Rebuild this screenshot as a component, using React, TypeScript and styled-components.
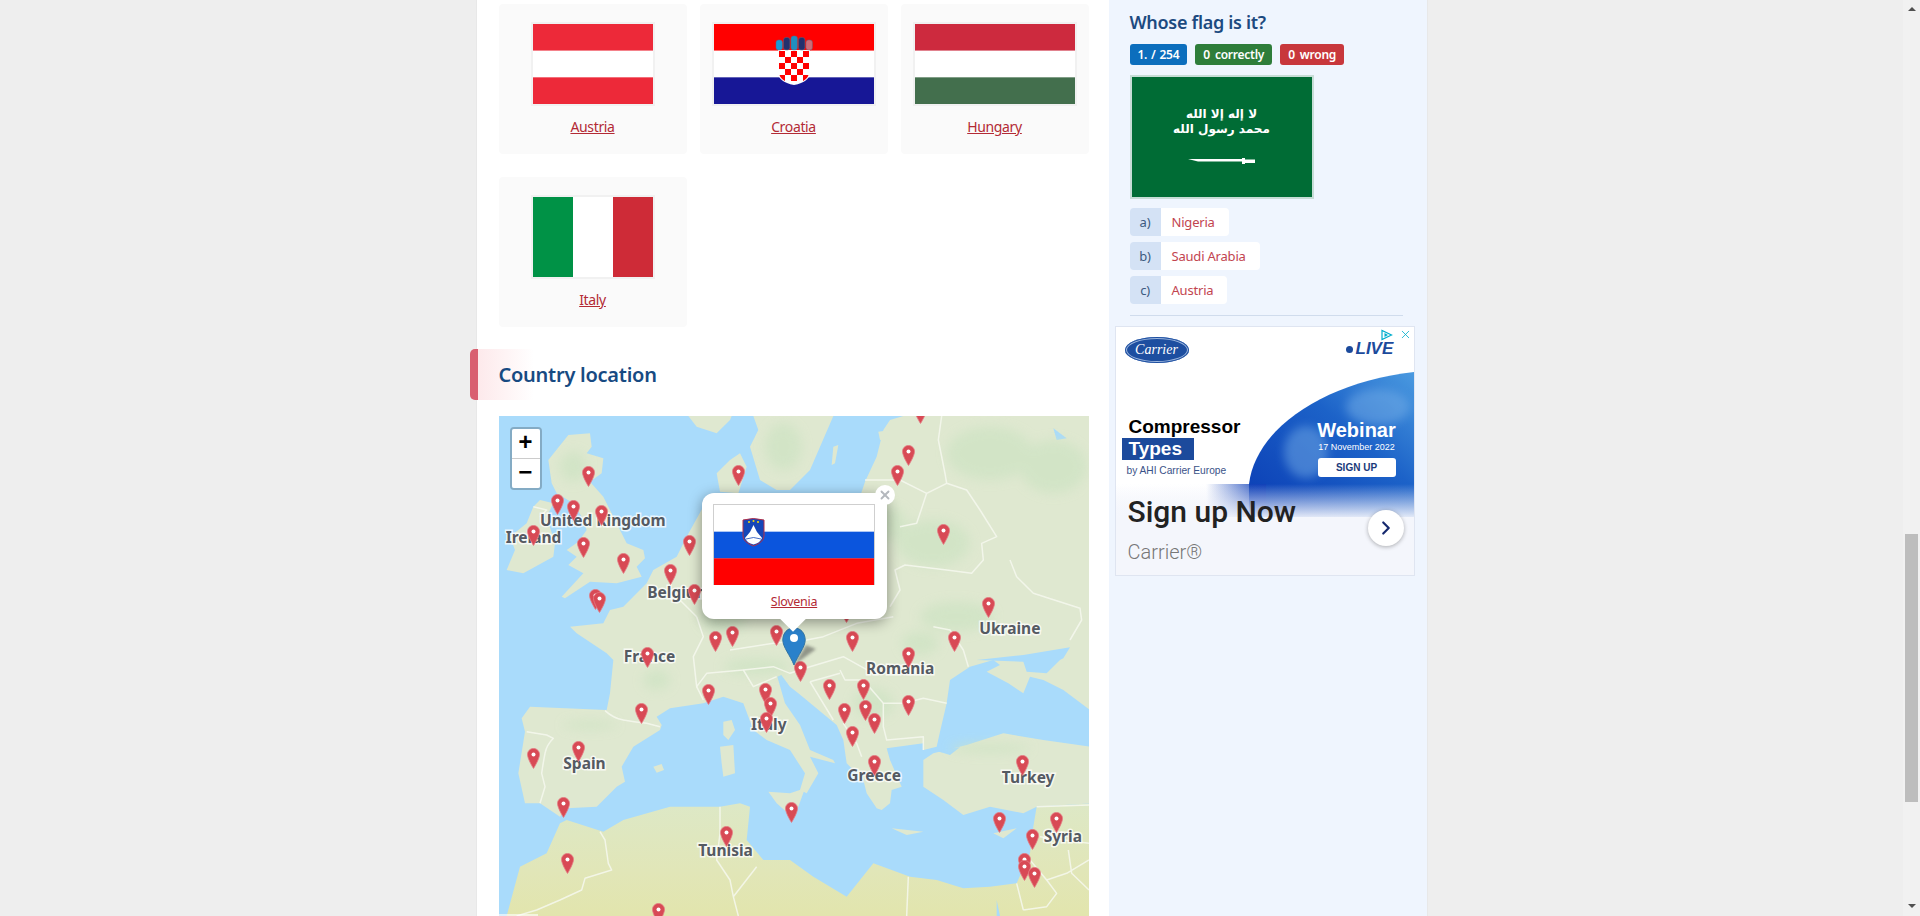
import React from "react";
import styled, { createGlobalStyle } from "styled-components";
import { X, ChevronRight } from "lucide-react";

const Global = createGlobalStyle`
    html, body { margin: 0; padding: 0; height: 100%; overflow: hidden; }
    body {
        background: #eeeeee;
        font-family: "Noto Sans", "Liberation Sans", sans-serif;
    }
`;

const Page = styled.div`
    display: flex;
    height: 916px;
    overflow: hidden;
`;

const Viewport = styled.div`
    flex: 1;
    display: flex;
    justify-content: center;
    min-width: 0;
`;

const Container = styled.div`
    width: 950px;
    display: flex;
    background: #fff;
    box-shadow: 0 0 0 1px #e8e8e8;
`;

const Main = styled.main`
    width: 632px;
    box-sizing: border-box;
    padding: 4px 20px 0 22px;
`;

const Cards = styled.div`
    display: grid;
    grid-template-columns: repeat(3, 188px);
    column-gap: 13px;
    row-gap: 23px;
`;

const Card = styled.div`
    height: 150px;
    box-sizing: border-box;
    padding-top: 18px;
    background: #fafafa;
    border-radius: 4px;
    display: flex;
    flex-direction: column;
    align-items: center;
`;

const FlagFrame = styled.div`
    border: 2px solid #f1f1f1;
    line-height: 0;
    svg { display: block; }
`;

const CountryLink = styled.a`
    margin-top: 11px;
    font-size: 14px;
    line-height: 20px;
    letter-spacing: -0.35px;
    color: #b32a35;
    text-decoration: underline;
`;

const SectionTitle = styled.h2`
    margin: 22px 0 0 -29px;
    height: 51px;
    padding-left: 29px;
    display: flex;
    align-items: center;
    font-size: 20px;
    font-weight: 600;
    letter-spacing: -0.25px;
    color: #174a82;
    border-radius: 5px 0 0 5px;
    background: linear-gradient(90deg, #d95f70 0, #d95f70 8px, #fde9eb 8px, #ffffff 64px);
`;

const MapBox = styled.div`
    position: relative;
    margin-top: 16px;
    width: 590px;
    height: 500px;
    overflow: hidden;
    background: #a9dbfb;
`;

const MapArt = styled.svg`
    display: block;
`;

const ZoomBar = styled.div`
    position: absolute;
    left: 11px;
    top: 11px;
    border: 2px solid rgba(0, 0, 0, 0.22);
    border-radius: 4px;
    background-clip: padding-box;
    display: flex;
    flex-direction: column;
`;

const ZoomButton = styled.a`
    width: 28px;
    height: 29px;
    background: #fff;
    display: flex;
    align-items: center;
    justify-content: center;
    font: bold 24px "Liberation Mono", monospace;
    color: #000;
    &:first-child {
        border-bottom: 1px solid #ccc;
        border-radius: 2px 2px 0 0;
    }
    &:last-child {
        border-radius: 0 0 2px 2px;
    }
`;

const MapLabel = styled.span`
    position: absolute;
    transform: translate(-50%, -50%);
    margin-top: -1px;
    font-size: 15.5px;
    font-weight: 700;
    white-space: nowrap;
    color: #555a62;
    paint-order: stroke fill;
    -webkit-text-stroke: 3px rgba(255, 255, 255, 0.75);
`;

const PinMark = styled.svg`
    position: absolute;
    width: 13px;
    height: 21px;
    margin: -20px 0 0 -6.5px;
`;

const ActiveMarker = styled.svg`
    position: absolute;
    left: 283px;
    top: 211px;
`;

const ScaleText = styled.span`
    position: absolute;
    left: 0;
    bottom: -10px;
    font: 11px "Liberation Sans", sans-serif;
    color: #333;
    background: rgba(255, 255, 255, 0.6);
`;

const Popup = styled.div`
    position: absolute;
    left: 203px;
    top: 77px;
    width: 185px;
    height: 126px;
    box-sizing: border-box;
    padding: 11px 11px 0;
    background: #fff;
    border-radius: 12px;
    box-shadow: 0 3px 14px rgba(0, 0, 0, 0.4);
    display: flex;
    flex-direction: column;
    align-items: center;
    &::after {
        content: "";
        position: absolute;
        left: 82px;
        bottom: -9px;
        width: 18px;
        height: 18px;
        background: #fff;
        transform: rotate(45deg);
    }
`;

const PopupFlag = styled.div`
    border: 1px solid #cfcfcf;
    border-bottom-width: 0;
    line-height: 0;
    svg { display: block; }
`;

const PopupLink = styled.a`
    margin-top: 8px;
    font-size: 12.5px;
    line-height: 18px;
    letter-spacing: -0.3px;
    color: #b32a35;
    text-decoration: underline;
    position: relative;
    z-index: 1;
`;

const PopupClose = styled.span`
    position: absolute;
    right: -8px;
    top: -8px;
    width: 20px;
    height: 20px;
    border-radius: 50%;
    background: #fff;
    color: #b4b8bd;
    display: flex;
    align-items: center;
    justify-content: center;
`;

const Sidebar = styled.aside`
    width: 318px;
    box-sizing: border-box;
    padding: 7px 24px 0 21px;
    background: #eff5fe;
`;

const SideTitle = styled.h3`
    margin: 0;
    font-size: 18px;
    line-height: 30px;
    font-weight: 600;
    letter-spacing: -0.3px;
    color: #1c4a80;
`;

const Badges = styled.div`
    display: flex;
    gap: 8px;
    margin-top: 7px;
`;

const Badge = styled.span<{ $bg: string }>`
    height: 21px;
    padding: 0 8px;
    border-radius: 3px;
    background: ${p => p.$bg};
    color: #fff;
    font-size: 12px;
    font-weight: 600;
    letter-spacing: -0.25px;
    word-spacing: 1px;
    display: flex;
    align-items: center;
    gap: 5px;
`;

const SaudiFlag = styled.div`
    margin-top: 10px;
    width: 180px;
    height: 120px;
    border: 2px solid #c6ddd6;
    background: #006c35;
    display: flex;
    flex-direction: column;
    align-items: center;
`;

const Shahada = styled.div`
    margin-top: 30px;
    display: flex;
    flex-direction: column;
    align-items: center;
    font: bold 12px/15px "DejaVu Sans", sans-serif;
    color: #fff;
    direction: rtl;
    white-space: nowrap;
`;

const Sword = styled.svg`
    margin-top: 21px;
`;

const Options = styled.div`
    margin-top: 9px;
    display: flex;
    flex-direction: column;
    align-items: flex-start;
    gap: 6px;
`;

const Option = styled.div`
    display: flex;
    height: 28px;
    font-size: 13px;
    letter-spacing: -0.2px;
    line-height: 28px;
`;

const OptionKey = styled.span`
    width: 31px;
    text-align: center;
    background: #d4e2f5;
    color: #3c5a80;
    border-radius: 4px 0 0 4px;
`;

const OptionValue = styled.a`
    padding: 0 14px 0 11px;
    background: #fff;
    color: #c2444f;
    border-radius: 0 4px 4px 0;
`;

const Divider = styled.hr`
    margin: 11px 0 0;
    border: 0;
    border-top: 1px solid #d0dced;
`;

const Ad = styled.div`
    position: relative;
    margin: 10px 0 0 -15px;
    width: 298px;
    height: 248px;
    border: 1px solid #dfe5f1;
    overflow: hidden;
    background: linear-gradient(180deg, #ffffff 0, #ffffff 157px, #f4f6fc 190px);
    font-family: "Liberation Sans", sans-serif;
`;

const AdArt = styled.svg`
    position: absolute;
    left: 0;
    top: 0;
`;

const AdChoices = styled.div`
    position: absolute;
    right: 2px;
    top: 1px;
    display: flex;
    align-items: center;
    gap: 6px;
    color: #00aecd;
`;

const AdLogo = styled.div`
    position: absolute;
    left: 9px;
    top: 10px;
    width: 64px;
    height: 26px;
    border-radius: 50%;
    background: #1d4ea0;
    box-shadow: inset 0 0 0 1px #1d4ea0, inset 0 0 0 2px #9db7de;
    color: #fff;
    font: italic 14px/26px "Liberation Serif", serif;
    text-align: center;
`;

const AdLive = styled.div`
    position: absolute;
    left: 230px;
    top: 13px;
    display: flex;
    align-items: center;
    gap: 3px;
    font: italic bold 17px/18px "Liberation Sans", sans-serif;
    color: #1b4a9c;
    &::before {
        content: "";
        width: 7px;
        height: 7px;
        border-radius: 50%;
        background: #1b4a9c;
    }
`;

const AdHeadline = styled.div`
    position: absolute;
    left: 13px;
    top: 89px;
    font: bold 19px/22px "Liberation Sans", sans-serif;
    color: #000;
`;

const AdHighlight = styled.div`
    position: absolute;
    left: 6px;
    top: 111px;
    width: 65px;
    height: 22px;
    padding-left: 7px;
    background: #1c4a9c;
    color: #fff;
    font: bold 19px/21px "Liberation Sans", sans-serif;
`;

const AdBy = styled.div`
    position: absolute;
    left: 11px;
    top: 137px;
    font-size: 10.2px;
    line-height: 13px;
    color: #3a5288;
    white-space: nowrap;
`;

const AdWebinar = styled.div`
    position: absolute;
    left: 191px;
    width: 100px;
    top: 91px;
    display: flex;
    flex-direction: column;
    align-items: center;
    color: #fff;
    b { font-size: 20px; line-height: 24px; }
    span { font-size: 9px; line-height: 12px; white-space: nowrap; margin-top: -1px; }
`;

const AdSignUp = styled.div`
    margin-top: 5px;
    width: 78px;
    height: 19px;
    border-radius: 3px;
    background: #fff;
    color: #1a3a7a;
    font-size: 10px;
    font-weight: 700;
    line-height: 19px;
    text-align: center;
`;

const AdFoot = styled.div`
    position: absolute;
    left: 12px;
    right: 10px;
    top: 167px;
    display: flex;
    align-items: center;
    justify-content: space-between;
`;

const AdCopy = styled.div`
    display: flex;
    flex-direction: column;
    font-family: Roboto, sans-serif;
`;

const AdCta = styled.span`
    font-size: 30px;
    line-height: 36px;
    font-weight: 500;
    color: #222;
`;

const AdBrand = styled.span`
    margin-top: 10px;
    font-size: 20px;
    line-height: 24px;
    font-weight: 300;
    color: #777;
`;

const AdRound = styled.span`
    width: 36px;
    height: 36px;
    border-radius: 50%;
    background: #fff;
    box-shadow: 0 1px 4px rgba(0, 0, 0, 0.3);
    color: #16296e;
    display: flex;
    align-items: center;
    justify-content: center;
    margin-top: -3px;
`;

const ScrollTrack = styled.div`
    width: 17px;
    flex: none;
    background: #f1f1f1;
    display: flex;
    flex-direction: column;
    align-items: center;
`;

const ScrollArrow = styled.span<{ $down?: boolean }>`
    width: 0;
    height: 0;
    margin-top: ${p => (p.$down ? "102px" : "7px")};
    border-left: 4px solid transparent;
    border-right: 4px solid transparent;
    ${p => (p.$down ? "border-top: 4px solid #505050;" : "border-bottom: 4px solid #505050;")}
`;

const ScrollThumb = styled.div`
    margin-top: 523px;
    width: 13px;
    height: 268px;
    background: #bdbdbd;
`;

const Stripes: React.FC<{ colors: string[]; vertical?: boolean; w: number; h: number; children?: React.ReactNode }> = ({ colors, vertical, w, h, children }) => (
    <svg width={w} height={h} viewBox={`0 0 ${w} ${h}`}>
        {colors.map((c, i) => vertical
            ? <rect key={i} x={(i * w) / colors.length} y={0} width={w / colors.length + 0.2} height={h} fill={c} />
            : <rect key={i} x={0} y={(i * h) / colors.length} width={w} height={h / colors.length + 0.2} fill={c} />)}
        {children}
    </svg>
);

const CroatiaArms = () => {
    const cells = [];
    for (let r = 0; r < 5; r++) {
        for (let c = 0; c < 5; c++) {
            cells.push(<rect key={`${r}-${c}`} x={65 + c * 6} y={27 + r * 6} width={6} height={6} fill={(r + c) % 2 ? "#fff" : "#f00"} />);
        }
    }
    const crown = [["#1a9ad6", 62, 16], ["#23306e", 69.500, 13.500], ["#1f8fc0", 77, 12], ["#23306e", 84.500, 13.500], ["#ce6b77", 92, 16]] as const;
    return (
        <g>
            <path d="M64 26H96V48Q96 58 80 61Q64 58 64 48Z" fill="#fff" />
            <clipPath id="shield"><path d="M65 27H95V48Q95 57 80 60Q65 57 65 48Z" /></clipPath>
            <g clipPath="url(#shield)">{cells}</g>
            {crown.map(([fill, x, y], i) => <rect key={i} x={x} y={y} width={6.4} height={26 - y} rx={2.500} fill={fill} stroke="#5a6a80" strokeWidth={0.5} />)}
        </g>
    );
};

const SloveniaArms = () => (
    <g>
        <path d="M29 15Q39 12 50 15V31Q50 37 39.500 41Q29 37 29 31Z" fill="#1546b8" stroke="#b0304a" strokeWidth={1} />
        <path d="M31 33L36 27L39.500 20L43 27L48 33Q46 38 39.500 39.500Q33 38 31 33Z" fill="#fff" />
        <path d="M32 34Q39.500 31 47 34" fill="none" stroke="#1546b8" strokeWidth={0.8} />
        <circle cx={35} cy={17} r={1} fill="#f5d90a" />
        <circle cx={39.500} cy={16} r={1} fill="#f5d90a" />
        <circle cx={44} cy={17} r={1} fill="#f5d90a" />
    </g>
);

// all map coordinates are full screen pixels x3, with the map's corner at 27,18
const mapX = (g: number) => (g - 27) / 3;
const mapY = (g: number) => (g - 18) / 3;

const PINS: [number, number][] = [
    [297, 229], [203, 312], [251, 330], [336, 345], [131, 405], [281, 442], [401, 488], [600, 434], [542, 522],
    [615, 582], [317, 597], [329, 607], [677, 724], [729, 708], [860, 705], [746, 226],
    [473, 772], [455, 940], [656, 882], [828, 880], [843, 922], [830, 967], [131, 1073], [266, 1053], [221, 1222],
    [233, 1390], [507, 1540], [710, 1307],
    [1292, 38], [1257, 165], [1223, 226], [1361, 402], [1496, 622], [1088, 724], [1394, 724], [1070, 636],
    [1257, 770], [933, 814], [1019, 868], [1121, 867], [1257, 916], [1064, 939], [1128, 930], [1155, 970], [1088, 1008],
    [1155, 1095], [1598, 1095], [1530, 1266], [1700, 1266], [1629, 1318], [1605, 1390], [1605, 1410], [1635, 1432], [905, 1235],
];

const LABELS: [string, number, number][] = [
    ["United Kingdom", 340, 333], ["Ireland", 132, 385], ["Belgium", 569, 548], ["France", 480, 740],
    ["Romania", 1232, 778], ["Ukraine", 1561, 658], ["Italy", 838, 945], ["Spain", 285, 1062],
    ["Tunisia", 708, 1322], ["Greece", 1154, 1099], ["Turkey", 1616, 1103], ["Syria", 1720, 1280],
];

const BORDERS = [
    "M345 902Q370 925 400 930T470 940L510 950",
    "M110 965L170 975L190 985Q170 1005 165 1030T155 1090L165 1130L150 1180",
    "M330 1265L345 1290L355 1360L365 1380L285 1405L275 1440L210 1470L140 1500L80 1518",
    "M690 1190L690 1270L680 1350L720 1410L730 1460L800 1370M730 1460L745 1518",
    "M1255 1400L1250 1518",
    "M1355 18L1345 90L1365 190L1370 220L1430 240L1470 300L1520 380L1475 400L1480 450L1445 490L1370 480L1245 465L1215 480L1230 540L1200 590",
    "M1560 450L1580 500L1630 550L1770 595L1775 630L1740 690",
    "M1125 210L1230 210L1310 250L1370 220M1310 250L1280 340L1230 350",
    "M1330 650L1380 660L1420 720L1435 770",
    "M1050 780L1065 810L1120 810L1180 880L1240 880L1300 865L1370 880",
    "M1180 880L1180 950L1190 990L1300 980L1300 1020",
    "M960 815L1050 790M960 815L1030 930M1060 940L1100 1000L1115 1040",
    "M1640 1190L1797 1185M1650 1280L1797 1300M1670 1410L1730 1390L1797 1350M1735 1320L1745 1390L1797 1440",
    "M1620 1350L1670 1410L1700 1450L1670 1490L1600 1500M1580 1420L1600 1500",
    "M620 620L640 680L610 740L620 830L650 790L760 780L850 770L900 790L960 770L1060 740L1150 790",
    "M720 720L850 700L950 690L1000 680L1100 640L1210 620",
    "M560 560L620 620M620 830L640 870M760 780L790 830L860 800",
    "M130 290L170 300L150 320",
];

const FOREST: [number, number, number, number][] = [
    [1500, 130, 130, 80], [1690, 170, 100, 80], [1330, 400, 110, 70], [1200, 340, 50, 50], [880, 110, 55, 70],
    [800, 770, 100, 25], [1290, 700, 55, 35], [1150, 880, 60, 45], [250, 170, 40, 45], [500, 810, 40, 30],
    [300, 945, 80, 12], [1500, 1015, 120, 14], [700, 620, 70, 50], [1400, 620, 110, 45],
];

const MapDrawing = () => (
    <MapArt width={590} height={500} viewBox="27 18 1770 1500">
        <defs>
            <linearGradient id="desert" x1="0" y1="1180" x2="0" y2="1518" gradientUnits="userSpaceOnUse">
                <stop offset="0" stopColor="#dde8c6" />
                <stop offset="0.6" stopColor="#e1e6b8" />
                <stop offset="1" stopColor="#e2e5ad" />
            </linearGradient>
            <filter id="soft" x="-30%" y="-30%" width="160%" height="160%">
                <feGaussianBlur stdDeviation="16" />
            </filter>
        </defs>
        <rect x="27" y="18" width="1770" height="1500" fill="#a9dbfb" />
        <g fill="#dfe8d0">
            <path d="M1240 18L1800 18L1800 900L1720 840L1660 810L1620 800L1600 850L1555 820L1490 785L1530 765L1510 750L1440 770L1380 810L1370 880L1350 965L1340 1010L1300 1020L1300 1000L1190 1015L1200 1050L1235 1130L1205 1140L1200 1180L1175 1200L1160 1195L1130 1150L1120 1110L1070 1060L1060 990L1040 945L925 850L900 830L874 795L862 800L885 880L930 945L960 1020L1030 1050L1035 1060L960 1040L985 1090L950 1150L930 1140L945 1090L900 1020L830 990L790 960L760 880L700 860L640 880L540 895L500 920L515 945L510 960L430 1010L395 1070L405 1115L380 1130L320 1190L230 1195L210 1220L150 1180L105 1180L85 1090L105 965L95 925L120 890L350 900L360 850L370 750L350 730L260 670L240 650L340 640L360 600L400 590L470 520L490 480L560 440L590 380L640 290L700 260L1110 260L1125 215L1160 140L1180 60L1200 30Z" />
            <path d="M790 18L805 60L780 110L810 210L860 240L900 240L960 180L1030 18Z" />
            <path d="M595 18L620 50L680 70L720 30L725 18Z" />
            <path d="M690 245L680 190L720 150L750 130L770 170L745 250Z" />
            <path d="M235 75L300 70L305 110L290 130L340 145L335 190L300 215L340 260L370 320L410 400L460 420L465 445L440 470L455 500L380 520L300 515L225 565L215 560L280 490L235 465L260 440L230 420L265 395L290 360L275 320L250 280L200 250L185 220L175 150Z" />
            <path d="M150 270L190 280L170 320L195 400L190 440L100 490L50 480L75 420L60 380L110 340L130 290Z" />
            <path d="M700 935L725 930L735 960L715 990L700 975Z" />
            <path d="M690 1010L730 1005L735 1090L700 1100L695 1060Z" />
            <path d="M490 1070L515 1062L522 1080L500 1088Z" />
            <path d="M835 1145L900 1150L945 1135L925 1190L900 1215L860 1180Z" />
            <path d="M1205 1255L1300 1265L1250 1275Z" />
            <path d="M1510 1270L1580 1255L1540 1285Z" />
            <path d="M1030 110L1045 105L1035 160L1025 165Z" />
            <path d="M1165 65L1200 60L1195 85L1170 90Z" />
        </g>
        <path fill="url(#desert)" d="M50 1518L90 1370L170 1330L210 1240L230 1230L340 1265L400 1230L540 1190L690 1190L750 1180L780 1190L770 1290L820 1350L900 1350L970 1400L1070 1460L1150 1360L1260 1400L1340 1410L1420 1435L1500 1430L1580 1420L1620 1330L1630 1250L1640 1190L1800 1180L1800 1518Z" />
        <path fill="#dfe8d0" d="M1300 1050L1330 1030L1430 1005L1540 970L1660 990L1800 1010L1800 1180L1640 1190L1600 1210L1500 1190L1420 1215L1360 1170L1300 1130Z" />
        <g fill="#a9dbfb">
            <path d="M1460 750L1600 735L1740 712L1720 745L1710 750L1670 790L1610 785L1600 755Z" />
            <path d="M1330 1020L1410 1012L1380 1035Z" />
            <path d="M1690 55L1730 85L1700 90Z" />
            <path d="M1520 1470L1530 1518L1520 1518Z" />
        </g>
        <g fill="#cde3c3" opacity="0.7" filter="url(#soft)">
            {FOREST.map(([cx, cy, rx, ry], i) => <ellipse key={i} cx={cx} cy={cy} rx={rx} ry={ry} />)}
        </g>
        <g fill="none" stroke="#f6f8ee" strokeWidth="4.500" strokeOpacity="0.85" strokeLinejoin="round">
            {BORDERS.map((d, i) => <path key={i} d={d} />)}
        </g>
    </MapArt>
);

const Pin: React.FC<{ x: number; y: number }> = ({ x, y }) => (
    <PinMark viewBox="0 0 13 21" style={{ left: mapX(x), top: mapY(y) }}>
        <path d="M6.500 .5C3 .5 .5 3.200 .5 6.500c0 4.500 6 14 6 14s6-9.500 6-14C12.500 3.200 10 .5 6.500 .5Z" fill="#d84a55" stroke="#e57b84" strokeWidth={0.8} />
        <circle cx={6.500} cy={6.500} r={2} fill="#fff" />
    </PinMark>
);

const flags = [
    { name: "Austria", colors: ["#ed2939", "#fff", "#ed2939"], w: 120 },
    { name: "Croatia", colors: ["#f00", "#fff", "#171796"], w: 160 },
    { name: "Hungary", colors: ["#cd2a3e", "#fff", "#436f4d"], w: 160 },
    { name: "Italy", colors: ["#009246", "#fff", "#ce2b37"], w: 120, vertical: true },
];

const App: React.FC = () => (
    <Page>
        <Global />
        <Viewport>
            <Container>
                <Main>
                    <Cards>
                        {flags.map(f => (
                            <Card key={f.name}>
                                <FlagFrame>
                                    <Stripes colors={f.colors} vertical={f.vertical} w={f.w} h={80}>
                                        {f.name === "Croatia" && <CroatiaArms />}
                                    </Stripes>
                                </FlagFrame>
                                <CountryLink>{f.name}</CountryLink>
                            </Card>
                        ))}
                    </Cards>
                    <SectionTitle>Country location</SectionTitle>
                    <MapBox>
                        <MapDrawing />
                        {LABELS.map(([name, x, y]) => (
                            <MapLabel key={name} style={{ left: mapX(x), top: mapY(y) }}>{name}</MapLabel>
                        ))}
                        {PINS.map(([x, y], i) => <Pin key={i} x={x} y={y} />)}
                        <ActiveMarker width={40} height={42} viewBox="0 0 40 42">
                            <defs>
                                <filter id="markerShade"><feGaussianBlur stdDeviation="1.6" /></filter>
                            </defs>
                            <path d="M12 38L24 18L34 22Z" fill="#333" opacity="0.45" filter="url(#markerShade)" />
                            <path d="M12 38C8 28 .8 20 .8 13C.8 6 5.600 .8 12 .8S23.200 6 23.200 13C23.200 20 16 28 12 38Z" fill="#2a81cb" stroke="#3274a3" />
                            <circle cx={12} cy={11} r={4} fill="#fff" />
                        </ActiveMarker>
                        <Popup>
                            <PopupClose><X size={14} strokeWidth={3.2} /></PopupClose>
                            <PopupFlag>
                                <Stripes colors={["#fff", "#0b55dd", "#f00"]} w={160} h={80}>
                                    <SloveniaArms />
                                </Stripes>
                            </PopupFlag>
                            <PopupLink>Slovenia</PopupLink>
                        </Popup>
                        <ZoomBar>
                            <ZoomButton>+</ZoomButton>
                            <ZoomButton>−</ZoomButton>
                        </ZoomBar>
                        <ScaleText>100,000</ScaleText>
                    </MapBox>
                </Main>
                <Sidebar>
                    <SideTitle>Whose flag is it?</SideTitle>
                    <Badges>
                        <Badge $bg="#0c6ebd">1. / 254</Badge>
                        <Badge $bg="#2e7d3a"><span>0</span><span>correctly</span></Badge>
                        <Badge $bg="#c8373c"><span>0</span><span>wrong</span></Badge>
                    </Badges>
                    <SaudiFlag>
                        <Shahada>
                            <span>لا إله إلا الله</span>
                            <span>محمد رسول الله</span>
                        </Shahada>
                        <Sword width={68} height={6} viewBox="0 0 68 6">
                            <path d="M0 1H54V0H57V1.500H67V5H57V6H54V3.500H10Z" fill="#fff" />
                        </Sword>
                    </SaudiFlag>
                    <Options>
                        {[["a)", "Nigeria"], ["b)", "Saudi Arabia"], ["c)", "Austria"]].map(([k, v]) => (
                            <Option key={k}>
                                <OptionKey>{k}</OptionKey>
                                <OptionValue>{v}</OptionValue>
                            </Option>
                        ))}
                    </Options>
                    <Divider />
                    <Ad>
                        <AdArt width={298} height={248} viewBox="0 0 298 248">
                            <defs>
                                <linearGradient id="adBlue" x1="0" y1="1" x2="1" y2="0">
                                    <stop offset="0" stopColor="#0a3cb4" />
                                    <stop offset="0.6" stopColor="#1c62c8" />
                                    <stop offset="1" stopColor="#4a9ae0" />
                                </linearGradient>
                                <linearGradient id="adLeft" x1="0" y1="0" x2="1" y2="0">
                                    <stop offset="0" stopColor="#1040b8" stopOpacity="0" />
                                    <stop offset="1" stopColor="#1040b8" />
                                </linearGradient>
                                <linearGradient id="adFade" x1="0" y1="0" x2="0" y2="1">
                                    <stop offset="0" stopColor="#f4f6fc" stopOpacity="0" />
                                    <stop offset="1" stopColor="#f4f6fc" />
                                </linearGradient>
                                <filter id="adSoft"><feGaussianBlur stdDeviation="5" /></filter>
                            </defs>
                            <path d="M133 157C140 100 210 55 298 45V190H133Z" fill="url(#adBlue)" />
                            <rect x="90" y="157" width="60" height="33" fill="url(#adLeft)" />
                            <g fill="#7fb6ea" opacity="0.45" filter="url(#adSoft)">
                                <ellipse cx="262" cy="80" rx="32" ry="18" />
                                <ellipse cx="190" cy="125" rx="22" ry="26" />
                            </g>
                            <rect x="0" y="157" width="298" height="36" fill="url(#adFade)" />
                        </AdArt>
                        <AdChoices>
                            <svg width={12} height={12} viewBox="0 0 12 12">
                                <path d="M1 1.500V10.500L10.500 6Z" fill="none" stroke="currentColor" strokeWidth={1.2} />
                                <path d="M3.500 4V8L7 6Z" fill="currentColor" />
                            </svg>
                            <X size={13} strokeWidth={1.5} />
                        </AdChoices>
                        <AdLogo>Carrier</AdLogo>
                        <AdLive>LIVE</AdLive>
                        <AdHeadline>Compressor</AdHeadline>
                        <AdHighlight>Types</AdHighlight>
                        <AdBy>by AHI Carrier Europe</AdBy>
                        <AdWebinar>
                            <b>Webinar</b>
                            <span>17 November 2022</span>
                            <AdSignUp>SIGN UP</AdSignUp>
                        </AdWebinar>
                        <AdFoot>
                            <AdCopy>
                                <AdCta>Sign up Now</AdCta>
                                <AdBrand>Carrier®</AdBrand>
                            </AdCopy>
                            <AdRound><ChevronRight size={22} strokeWidth={2.4} /></AdRound>
                        </AdFoot>
                    </Ad>
                </Sidebar>
            </Container>
        </Viewport>
        <ScrollTrack>
            <ScrollArrow />
            <ScrollThumb />
            <ScrollArrow $down />
        </ScrollTrack>
    </Page>
);

export default App;
